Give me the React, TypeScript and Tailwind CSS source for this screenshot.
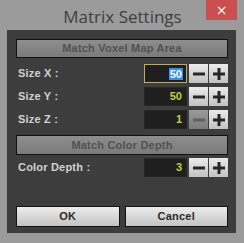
import React from "react";

const lbl = "font-['Liberation_Sans',Arial,sans-serif] font-bold text-[11px]";

function Minus({ disabled }: { disabled?: boolean }) {
  return (
    <svg width="14" height="14" viewBox="0 0 14 14">
      <rect x="1" y="5.5" width="12" height="3" fill={disabled ? "#5e5e5e" : "#262626"} />
    </svg>
  );
}
function Plus() {
  return (
    <svg width="14" height="14" viewBox="0 0 14 14">
      <rect x="1" y="5.5" width="12" height="3" fill="#262626" />
      <rect x="5.5" y="1" width="3" height="12" fill="#262626" />
    </svg>
  );
}

function SpinBtn({ children, disabled }: { children: React.ReactNode; disabled?: boolean }) {
  return (
    <div
      className={
        "w-[19px] h-[19px] flex items-center justify-center " +
        (disabled
          ? "bg-gradient-to-b from-[#9a9a9a] to-[#7c7c7c]"
          : "bg-gradient-to-b from-[#ececec] to-[#c2c2c2]")
      }
    >
      {children}
    </div>
  );
}

function Row({
  label,
  value,
  focused,
  minusDisabled,
  className = "",
}: {
  label: string;
  value: string;
  focused?: boolean;
  minusDisabled?: boolean;
  className?: string;
}) {
  return (
    <div className={"flex items-center h-[19px] " + className}>
      <div className={lbl + " text-[#d2d2d2] pl-[2px] flex-1 tracking-[0.2px]"}>{label}</div>
      <div
        className={
          "w-[43px] h-[19px] bg-[#1f1f1f] flex items-center justify-end pr-[3px] border " +
          (focused ? "border-[#bfae55]" : "border-[#262626]")
        }
      >
        {focused ? (
          <span className={lbl + " bg-[#3390f0] text-white leading-[12px] px-[1px]"}>{value}</span>
        ) : (
          <span className={lbl + " text-[#bcd23a] px-[1px]"}>{value}</span>
        )}
      </div>
      <div className="flex ml-[2px] gap-[1px]">
        <SpinBtn disabled={minusDisabled}>
          <Minus disabled={minusDisabled} />
        </SpinBtn>
        <SpinBtn>
          <Plus />
        </SpinBtn>
      </div>
    </div>
  );
}

function Bar({ text, className = "" }: { text: string; className?: string }) {
  return (
    <div
      className={
        "border border-[#111] bg-gradient-to-b from-[#8e8e8e] to-[#7a7a7a] flex items-center justify-center " +
        className
      }
    >
      <span className={lbl + " text-[#525252] tracking-[0.2px]"}>{text}</span>
    </div>
  );
}

function Btn({ text }: { text: string }) {
  return (
    <div className="flex-1 h-[21px] border border-[#111] bg-gradient-to-b from-[#ededed] to-[#c3c3c3] flex items-center justify-center">
      <span className={lbl + " text-[#2a2a2a] tracking-[0.2px]"}>{text}</span>
    </div>
  );
}

export default function App() {
  return (
    <div className="w-[244px] h-[243px] bg-[#9b9b9b] flex flex-col relative overflow-hidden">
      <div className="h-[30px] flex items-center justify-center">
        <span className="font-['Open_Sans',sans-serif] text-[17px] text-[#3f3f3f] mt-[3px] ml-[1px]">
          Matrix Settings
        </span>
      </div>
      <div className="absolute left-[206px] top-0 w-[31px] h-[20px] bg-[#c9504f] flex items-center justify-center">
        <span className="font-['DejaVu_Sans',sans-serif] text-white text-[14px] leading-none">×</span>
      </div>
      <div className="ml-[7px] w-[229px] h-[203px] bg-[#3d3d3d] flex flex-col pt-[9px] pl-[9px] pr-[8px] pb-[6px]">
        <Bar text="Match Voxel Map Area" className="h-[19px]" />
        <Row label="Size X :" value="50" focused className="mt-[6px]" />
        <Row label="Size Y :" value="50" className="mt-[4px]" />
        <Row label="Size Z :" value="1" minusDisabled className="mt-[4px]" />
        <Bar text="Match Color Depth" className="h-[20px] mt-[6px]" />
        <Row label="Color Depth :" value="3" className="mt-[3px]" />
        <div className="mt-auto flex gap-[5px]">
          <Btn text="OK" />
          <Btn text="Cancel" />
        </div>
      </div>
    </div>
  );
}
